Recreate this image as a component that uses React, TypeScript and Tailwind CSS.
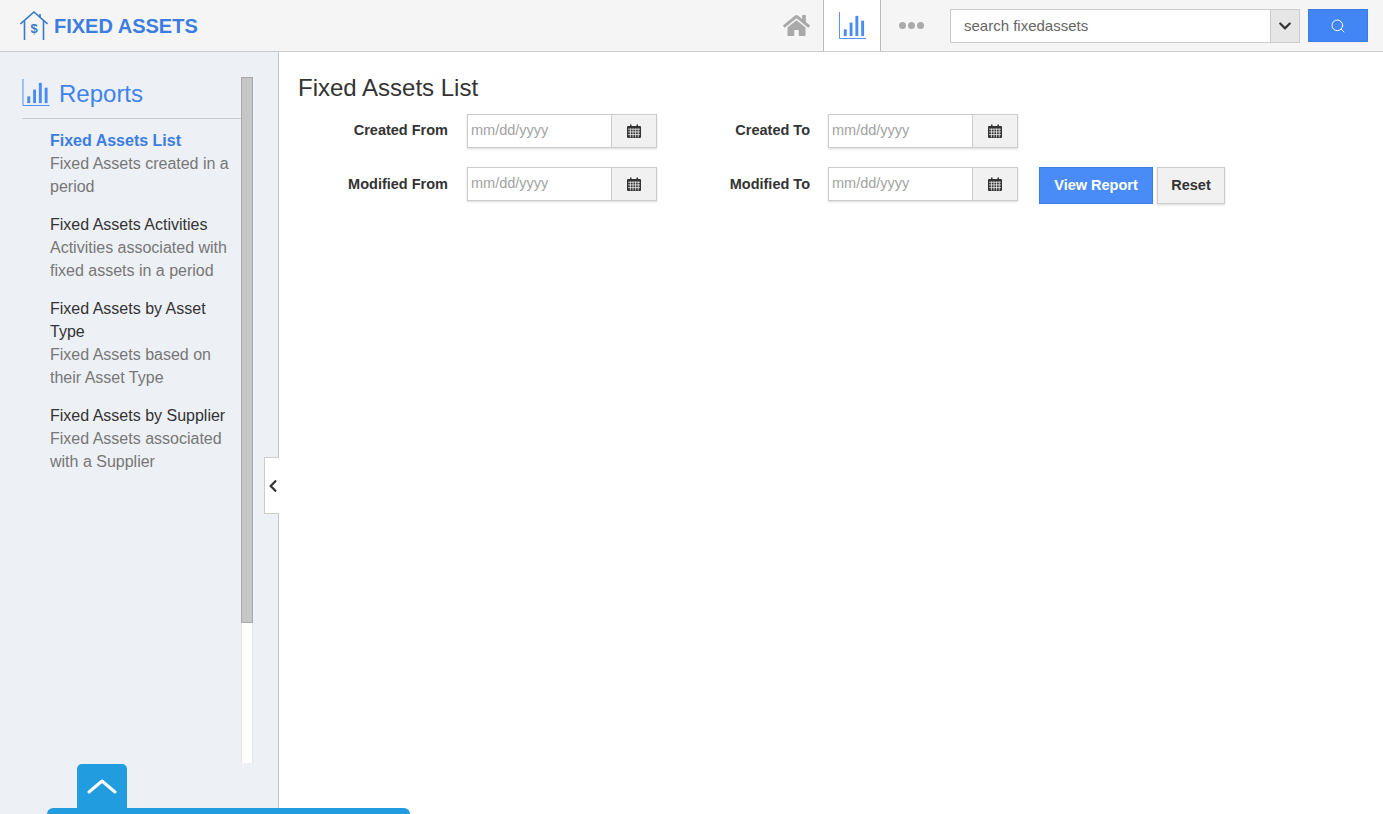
import React from "react";
import { FaChevronDown, FaChevronLeft, FaHome } from "react-icons/fa";
import { Search } from "lucide-react";

const font = "font-['Liberation_Sans',Arial,sans-serif]";

const ChartIcon = ({ className }: { className: string }) => (
  <svg viewBox="0 0 28 28" className={className} fill="none">
    <path d="M.5 0v27.5H28" stroke="currentColor" strokeWidth="1" />
    <rect x="5" y="18" width="3" height="7" fill="currentColor" />
    <rect x="11" y="11" width="3" height="14" fill="currentColor" />
    <rect x="17" y="4" width="3" height="21" fill="currentColor" />
    <rect x="23" y="9" width="3" height="16" fill="currentColor" />
  </svg>
);

const LogoIcon = () => (
  <svg viewBox="0 0 28 29" className="h-[29px] w-[28px] text-[#3a7bc8]" fill="none" stroke="currentColor">
    <path d="M.5 13 14 1l13.5 12" strokeWidth="1.6" />
    <path d="M4.5 10v19M23.5 10v19M20 3v4" strokeWidth="1.6" />
    <text x="14" y="22" textAnchor="middle" fontSize="13" fontWeight="700" fill="currentColor" stroke="none" fontFamily="Liberation Sans">$</text>
  </svg>
);

const CalendarIcon = () => (
  <svg viewBox="0 0 14 14" className="h-[14px] w-[14px] text-[#333]">
    <path fill="currentColor" d="M1 2h2V0.5h1.5V2h5V.5H11V2h2a1 1 0 0 1 1 1v10a1 1 0 0 1-1 1H1a1 1 0 0 1-1-1V3a1 1 0 0 1 1-1z" />
    <path stroke="#f1f1f1" strokeWidth="0.8" d="M1 5.2h12M1 7.9h12M1 10.6h12M3.4 4.5v9M6 4.5v9M8.6 4.5v9M11.2 4.5v9" />
  </svg>
);

const DateField = () => (
  <div className="flex h-[34px] w-[190px] border border-[#ccc] shadow-[0_1px_2px_rgba(0,0,0,0.15)]">
    <input
      readOnly
      placeholder="mm/dd/yyyy"
      className="w-[143px] bg-white pl-[3px] text-[14.5px] outline-none placeholder:text-[#a3a3a3]"
    />
    <div className="flex flex-1 items-center justify-center border-l border-[#ccc] bg-[#f1f1f1]">
      <CalendarIcon />
    </div>
  </div>
);

const reports = [
  { title: "Fixed Assets List", desc: "Fixed Assets created in a period", active: true },
  { title: "Fixed Assets Activities", desc: "Activities associated with fixed assets in a period" },
  { title: "Fixed Assets by Asset Type", desc: "Fixed Assets based on their Asset Type" },
  { title: "Fixed Assets by Supplier", desc: "Fixed Assets associated with a Supplier" },
];

export default function App() {
  return (
    <div className={`${font} relative flex h-[814px] w-full flex-col overflow-hidden bg-white text-[#333]`}>
      <header className="flex h-[52px] shrink-0 items-stretch border-b border-[#ccc] bg-[#f5f5f5]">
        <div className="flex items-center pl-[20px]">
          <LogoIcon />
          <span className="ml-[6px] text-[20px] font-bold text-[#3b7de0]">FIXED ASSETS</span>
        </div>
        <div className="ml-auto flex items-stretch">
          <div className="flex w-[59px] items-center justify-center pl-[5px]">
            <FaHome className="h-[27px] w-[27px] text-[#a9a9a9]" />
          </div>
          <div className="flex w-[58px] items-center justify-center border-x border-[#bbb] bg-white">
            <ChartIcon className="h-[27px] w-[27px] text-[#4a8cf7]" />
          </div>
          <div className="flex w-[69px] items-center justify-center gap-[2px] pr-[8px]">
            <span className="h-[7px] w-[7px] rounded-full bg-[#aaa]" />
            <span className="h-[7px] w-[7px] rounded-full bg-[#aaa]" />
            <span className="h-[7px] w-[7px] rounded-full bg-[#aaa]" />
          </div>
          <div className="my-auto flex h-[34px] w-[350px] border border-[#ccc] bg-white">
            <div className="flex-1 pl-[13px] text-[15px] leading-[32px] text-[#666]">search fixedassets</div>
            <div className="flex w-[29px] items-center justify-center border-l border-[#ccc] bg-[#e6e6e6]">
              <FaChevronDown className="h-[14px] w-[14px] text-[#333]" />
            </div>
          </div>
          <div className="my-auto ml-[8px] mr-[15px] flex h-[33px] w-[60px] items-center justify-center border border-[#3b7de0] bg-[#4285f4]">
            <Search className="h-[16px] w-[16px] text-white" strokeWidth={1.5} />
          </div>
        </div>
      </header>

      <div className="flex flex-1">
        <aside className="flex w-[279px] shrink-0 border-r border-[#c4c4c4] bg-[#edf0f5] pl-[22px] pt-[25px]">
          <div className="w-[219px]">
            <div className="flex h-[42px] items-start border-b border-[#ccc]">
              <ChartIcon className="mt-[2px] h-[27px] w-[28px] text-[#4a8cf7]" />
              <span className="ml-[9px] text-[24px] leading-[33px] text-[#3f83ee]">Reports</span>
            </div>
            <ul className="pl-[28px] pt-[10px] text-[16px] leading-[23px]">
              {reports.map((r) => (
                <li key={r.title} className="mb-[15px]">
                  <div className={r.active ? "font-bold text-[#3b7de0]" : "text-[#333]"}>{r.title}</div>
                  <div className="text-[#777]">{r.desc}</div>
                </li>
              ))}
            </ul>
          </div>
          <div className="h-[686px] w-[12px] border-x border-[#e4e4e4] bg-white">
            <div className="-mx-px h-[546px] border border-[#a8a8a8] bg-[#c6c6c6]" />
          </div>
        </aside>

        <main className="flex-1 pl-[19px] pt-[21px]">
          <h1 className="text-[24px] font-normal leading-[30px] text-[#333]">Fixed Assets List</h1>
          <div className="mt-[11px] flex items-center">
            <label className="w-[150px] text-right text-[14.5px] font-bold">Created From</label>
            <div className="ml-[19px]"><DateField /></div>
            <label className="w-[153px] text-right text-[14.5px] font-bold">Created To</label>
            <div className="ml-[18px]"><DateField /></div>
          </div>
          <div className="mt-[19px] flex items-start">
            <label className="w-[150px] pt-[7px] text-right text-[14.5px] font-bold">Modified From</label>
            <div className="ml-[19px]"><DateField /></div>
            <label className="w-[153px] pt-[7px] text-right text-[14.5px] font-bold">Modified To</label>
            <div className="ml-[18px]"><DateField /></div>
            <button className="ml-[21px] h-[37px] w-[114px] border border-[#3b7de0] bg-[#4a8cf7] text-[14.5px] font-bold text-white">View Report</button>
            <button className="ml-[4px] h-[37px] w-[68px] border border-[#ccc] bg-[#f1f1f1] text-[14.5px] font-bold text-[#333] shadow-[0_1px_2px_rgba(0,0,0,0.15)]">Reset</button>
          </div>
        </main>
      </div>

      <div className="absolute left-[264px] top-[457px] flex h-[57px] w-[15px] items-center justify-end border border-r-0 border-[#ccc] bg-white">
        <FaChevronLeft className="h-[14px] w-[12px] text-[#333]" />
      </div>
      <div className="absolute left-[77px] top-[764px] flex h-[44px] w-[50px] items-center justify-center rounded-t-[5px] bg-[#209cdf]">
        <svg viewBox="0 0 30 16" className="h-[16px] w-[30px]" fill="none" stroke="#fff" strokeWidth="3" strokeLinecap="round" strokeLinejoin="round">
          <path d="M2 14 15 3l13 11" />
        </svg>
      </div>
      <div className="absolute left-[47px] top-[808px] h-[6px] w-[363px] rounded-t-[6px] bg-[#209cdf]" />
    </div>
  );
}
